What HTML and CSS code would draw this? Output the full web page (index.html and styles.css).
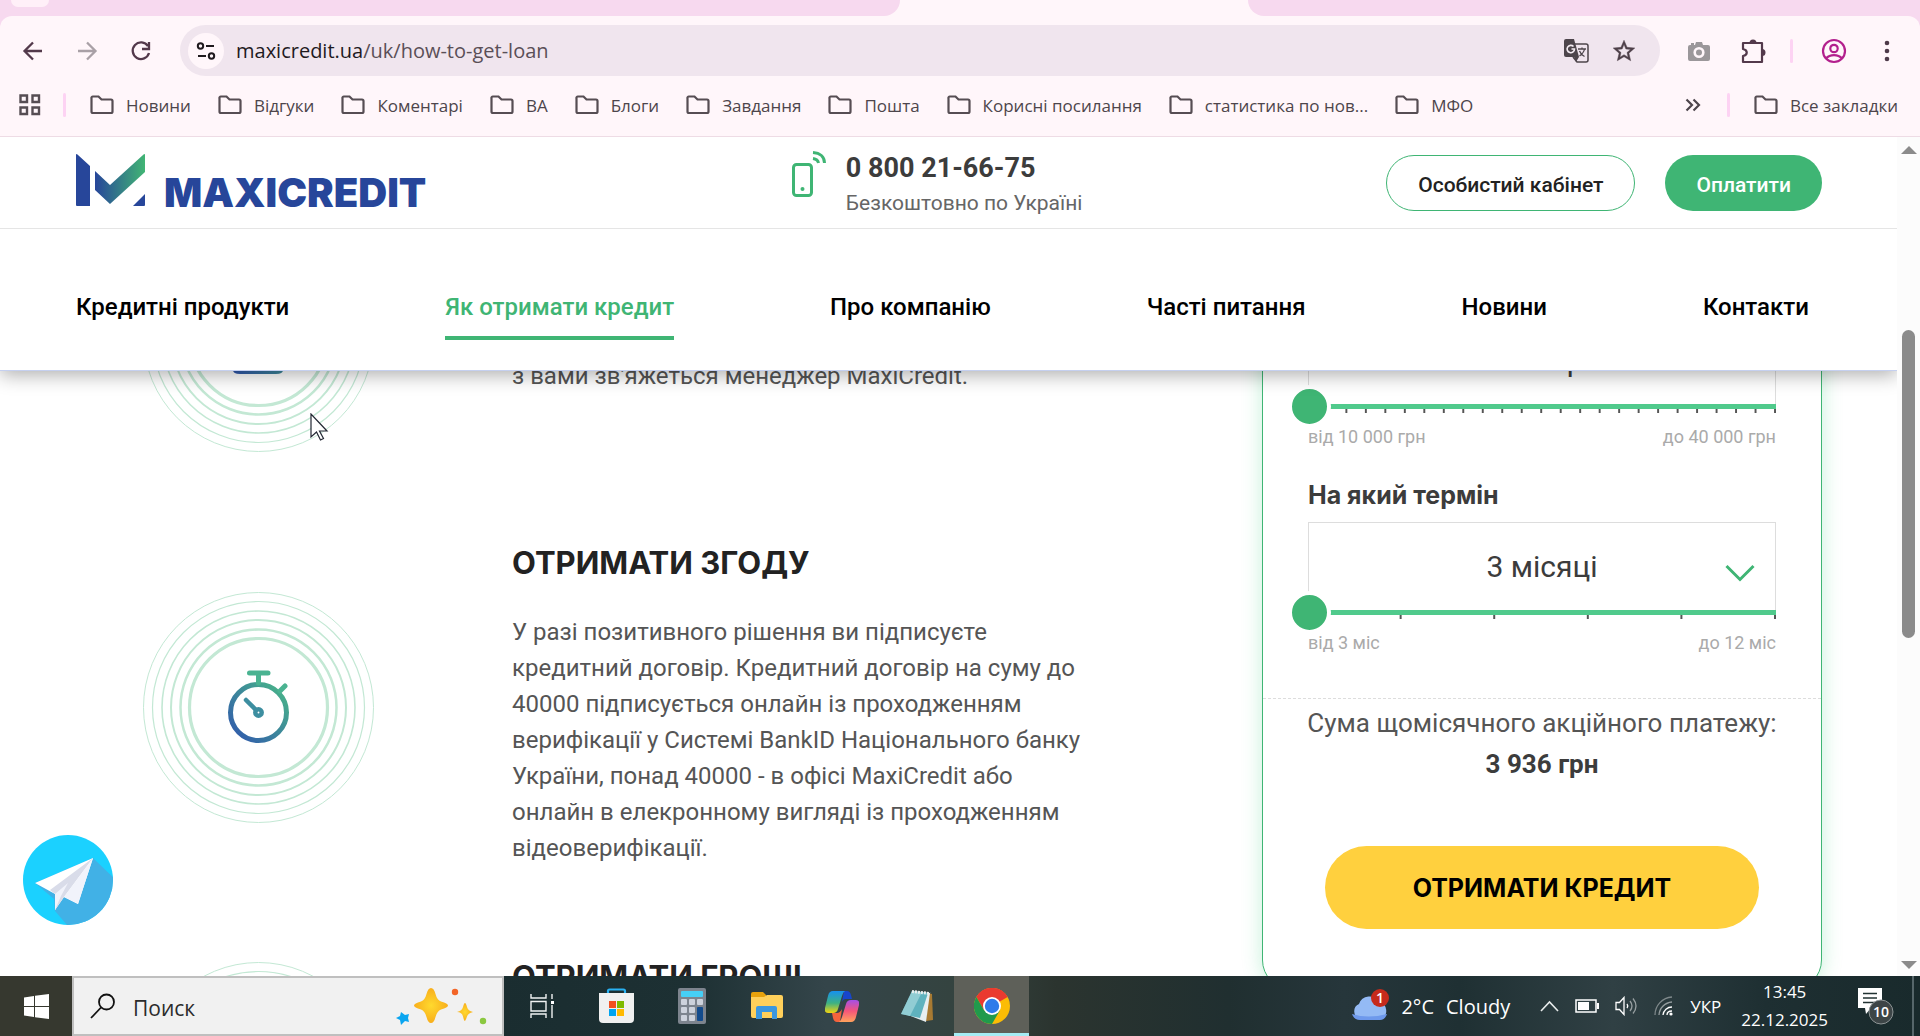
FILE: index.html
```html
<!DOCTYPE html>
<html lang="uk">
<head>
<meta charset="utf-8">
<title>MaxiCredit – Як отримати кредит</title>
<link rel="stylesheet" href="styles.css">
</head>
<body>
<svg class="defs" width="0" height="0" aria-hidden="true">
  <defs>
    <linearGradient id="brand" x1="0" y1="1" x2="1" y2="0"><stop offset="0" stop-color="#2f55ae"/><stop offset="1" stop-color="#4ab987"/></linearGradient>
    <linearGradient id="mark" x1="0" y1="0" x2="1" y2="0"><stop offset="0" stop-color="#27469a"/><stop offset="1" stop-color="#41b574"/></linearGradient>
    <symbol id="folder" viewBox="0 0 24 20"><path d="M1.500 3.500 a1.500 1.500 0 0 1 1.500-2h5.500l3 3h9.500a1.500 1.500 0 0 1 1.500 1.500v10.500a1.500 1.500 0 0 1-1.500 1.500h-18a1.500 1.500 0 0 1-1.500-1.500z" fill="none" stroke="#564d53" stroke-width="2.200"/></symbol>
    <symbol id="rings" viewBox="0 0 231 231">
      <g fill="none" stroke="#c3e8d4">
        <circle cx="115.500" cy="115.500" r="115" stroke-width="1"/>
        <circle cx="115.500" cy="115.500" r="106" stroke-width="1.200"/>
        <circle cx="115.500" cy="115.500" r="96.500" stroke-width="1.600"/>
        <circle cx="115.500" cy="115.500" r="87.500" stroke-width="2"/>
        <circle cx="115.500" cy="115.500" r="78" stroke-width="2.500"/>
        <circle cx="115.500" cy="115.500" r="69" stroke-width="3.200"/>
      </g>
    </symbol>
  </defs>
</svg>

<div class="browser">
  <header class="chrome">
    <div class="tabstrip"><div class="tabs-left"><i class="tab-pill"></i></div><div class="tab-active"></div><div class="tabs-right"></div></div>
    <div class="toolbar">
      <div class="nav-buttons">
        <button class="icon-btn" aria-label="Назад"><svg width="24" height="24" viewBox="0 0 24 24"><path d="M21 12H4M12 3.500L3.500 12l8.500 8.500" fill="none" stroke="#53394b" stroke-width="2.300"/></svg></button>
        <button class="icon-btn" aria-label="Вперед"><svg width="24" height="24" viewBox="0 0 24 24"><path d="M3 12h17M12 3.500l8.500 8.500-8.500 8.500" fill="none" stroke="#a9a0a6" stroke-width="2.300"/></svg></button>
        <button class="icon-btn" aria-label="Оновити"><svg width="24" height="24" viewBox="0 0 24 24"><path d="M19 7.200A8.300 8.300 0 1 0 20 14" fill="none" stroke="#53394b" stroke-width="2.300"/><path d="M20 3v7h-7" fill="none" stroke="#53394b" stroke-width="2.300"/></svg></button>
      </div>
      <div class="omnibox">
        <button class="site-info" aria-label="Відомості про сайт"><svg width="20" height="20" viewBox="0 0 20 20" fill="none" stroke="#1f1a1e" stroke-width="2"><circle cx="4.500" cy="5" r="2.700"/><path d="M10 5h8M2 15h8"/><circle cx="15.500" cy="15" r="2.700"/></svg></button>
        <div class="url"><span class="host">maxicredit.ua</span>/uk/how-to-get-loan</div>
        <button class="icon-btn" aria-label="Перекласти"><svg width="26" height="26" viewBox="0 0 26 26"><path d="M10 6h13a2 2 0 0 1 2 2v14a2 2 0 0 1-2 2h-9l-4-5" fill="#f0e5ee" stroke="#4d454b" stroke-width="1.500"/><path d="M1 3a2 2 0 0 1 2-2h8l5 18H3a2 2 0 0 1-2-2z" fill="#4d454b"/><path d="M11 19l5 0-3 5z" fill="#4d454b"/><path d="M10.500 8.500A3.700 3.700 0 1 0 11.500 11H8.500" fill="none" stroke="#f4ecf2" stroke-width="1.600"/><path d="M15 11h8M19 9.500V11M21.500 11c-.5 3-3 5.500-5 7M16.500 13c1 2.500 3 4.500 5 5.500" fill="none" stroke="#4d454b" stroke-width="1.300"/></svg></button>
        <button class="icon-btn" aria-label="Додати до закладок"><svg width="26" height="26" viewBox="0 0 24 24"><path fill="#4d3f48" stroke="#4d3f48" stroke-width=".4" d="M22 9.240l-7.190-.62L12 2 9.190 8.630 2 9.240l5.460 4.730L5.820 21 12 17.270 18.180 21l-1.630-7.030L22 9.240zM12 15.400l-3.760 2.270 1-4.280-3.320-2.880 4.380-.38L12 6.100l1.710 4.040 4.380.38-3.320 2.880 1 4.280L12 15.400z"/></svg></button>
      </div>
      <div class="extensions">
        <button class="icon-btn" aria-label="Камера"><svg width="24" height="24" viewBox="0 0 24 24"><path d="M3 6h1V4h3v2h1l1-3h6l1 3h5a2 2 0 0 1 2 2v12a2 2 0 0 1-2 2H3a2 2 0 0 1-2-2V8a2 2 0 0 1 2-2z" fill="#9b979a"/><circle cx="12" cy="13.500" r="4.300" fill="none" stroke="#fff6fa" stroke-width="2.600"/></svg></button>
        <button class="icon-btn" aria-label="Розширення"><svg width="28" height="28" viewBox="0 0 28 28"><path d="M4 6h19v19H4v-6c5-1 5-6 0-7z" fill="none" stroke="#53394b" stroke-width="2.200" stroke-linejoin="round"/><path d="M10.500 6a3.500 3.500 0 0 1 7 0zM23 12a3.500 3.500 0 0 1 0 7z" fill="#53394b"/></svg></button>
        <i class="divider"></i>
        <button class="icon-btn" aria-label="Профіль"><svg width="26" height="26" viewBox="0 0 26 26" fill="none" stroke="#b3208d" stroke-width="2.200"><circle cx="13" cy="13" r="11"/><circle cx="13" cy="10.500" r="3.700"/><path d="M5 20.500c4-4.500 12-4.500 16 0"/></svg></button>
        <button class="icon-btn" aria-label="Меню"><svg width="24" height="24" viewBox="0 0 24 24" fill="#4e3a49"><circle cx="12" cy="4" r="2.300"/><circle cx="12" cy="12" r="2.300"/><circle cx="12" cy="20" r="2.300"/></svg></button>
      </div>
    </div>
    <nav class="bookmarks" aria-label="Закладки">
      <svg class="apps" width="22" height="22" viewBox="0 0 22 22" fill="none" stroke="#564d53" stroke-width="2.400"><path d="M1.500 1.500h6.500v6.500H1.500zM13.500 1.500h6.500v6.500h-6.500zM1.500 13.500h6.500v6.500H1.500zM13.500 13.500h6.500v6.500h-6.500z"/></svg>
      <i class="divider"></i>
      <div class="bookmark-list">
        <a href="#"><svg><use href="#folder"/></svg>Новини</a>
        <a href="#"><svg><use href="#folder"/></svg>Відгуки</a>
        <a href="#"><svg><use href="#folder"/></svg>Коментарі</a>
        <a href="#"><svg><use href="#folder"/></svg>ВА</a>
        <a href="#"><svg><use href="#folder"/></svg>Блоги</a>
        <a href="#"><svg><use href="#folder"/></svg>Завдання</a>
        <a href="#"><svg><use href="#folder"/></svg>Пошта</a>
        <a href="#"><svg><use href="#folder"/></svg>Корисні посилання</a>
        <a href="#"><svg><use href="#folder"/></svg>статистика по нов...</a>
        <a href="#"><svg><use href="#folder"/></svg>МФО</a>
      </div>
      <button class="icon-btn more" aria-label="Інші закладки"><svg width="16" height="14" viewBox="0 0 16 14" fill="none" stroke="#4d454b" stroke-width="2.200"><path d="M1.500 1.500L7 7l-5.500 5.500M8.500 1.500L14 7l-5.500 5.500"/></svg></button>
      <i class="divider"></i>
      <a href="#"><svg><use href="#folder"/></svg>Все закладки</a>
    </nav>
  </header>

  <div class="viewport">
    <div class="page">
      <div class="site-header">
        <div class="top-row">
          <a class="logo" href="#"><svg width="69" height="52" viewBox="0 0 69 52"><path d="M0 1q0-2 2 0l12 11v40H1q-1 0-1-1z" fill="#27469a"/><path d="M19 17l15 14L67 1q2-2 2 0v17L34 50 19 36z" fill="url(#mark)"/><path d="M57 52l12-12v11q0 1-1 1z" fill="#27469a"/></svg><span>MAXICREDIT</span></a>
          <div class="phone">
            <svg width="34" height="46" viewBox="0 0 34 46" fill="none" stroke="#3fb574"><rect x="1.500" y="13.500" width="18" height="31" rx="3" stroke-width="3"/><circle cx="10.500" cy="38" r="2" fill="#3fb574" stroke="none"/><path d="M21 1.500c7 .5 11.500 4.500 11.500 10.500M21 7.500c3.500.5 5 2 5.500 4.500" stroke-width="3"/></svg>
            <div><a class="phone-number" href="tel:0800216675">0 800 21-66-75</a><p>Безкоштовно по Україні</p></div>
          </div>
          <div class="actions"><button class="pill outline">Особистий кабінет</button><button class="pill solid">Оплатити</button></div>
        </div>
        <nav class="main-nav">
          <a href="#">Кредитні продукти</a><a class="active" href="#">Як отримати кредит</a><a href="#">Про компанію</a><a href="#">Часті питання</a><a href="#">Новини</a><a href="#">Контакти</a>
        </nav>
      </div>

      <main class="content">
        <div class="columns">
          <section class="steps">
            <article class="step first">
              <svg class="step-icon" viewBox="0 0 231 231"><use href="#rings"/><path d="M90 80h50v69q0 4-7 4H97q-7 0-7-4z" fill="url(#brand)"/></svg>
              <div class="step-text"><p>з вами зв'яжеться менеджер MaxiCredit.</p></div>
            </article>
            <article class="step">
              <svg class="step-icon" viewBox="0 0 231 231"><use href="#rings"/>
                <g fill="none" stroke="url(#brand)" stroke-width="5" stroke-linecap="round"><circle cx="115.500" cy="120.500" r="28"/></g>
                <g fill="none" stroke="#4ab391" stroke-width="5" stroke-linecap="round"><path d="M106.500 81h18.500M115.500 83v8M137 99l5-5"/></g>
                <g fill="none" stroke="#3d8ea0" stroke-width="4.500" stroke-linecap="round"><path d="M103 108l10 10"/><circle cx="115.500" cy="120.500" r="3.200"/></g>
              </svg>
              <div class="step-text">
                <h2>ОТРИМАТИ ЗГОДУ</h2>
                <p>У разі позитивного рішення ви підписуєте кредитний договір. Кредитний договір на суму до 40000 підписується онлайн із проходженням верифікації у Системі BankID Національного банку України, понад 40000 - в офісі MaxiCredit або онлайн в елекронному вигляді із проходженням відеоверифікації.</p>
              </div>
            </article>
            <article class="step last">
              <svg class="step-icon" viewBox="0 0 231 231"><use href="#rings"/></svg>
              <div class="step-text"><h2>ОТРИМАТИ ГРОШІ</h2></div>
            </article>
          </section>

          <form class="calculator">
            <div class="field">
              <label class="field-title" for="amount">Яка сума</label>
              <div class="box"><input id="amount" class="amount" type="text" value="10 000 грн"></div>
              <div class="ticks by-24"></div>
              <input class="slider" type="range" min="10000" max="40000" value="10000" aria-label="Сума кредиту">
              <div class="limits"><span>від 10 000 грн</span><span>до 40 000 грн</span></div>
            </div>
            <div class="field">
              <label class="field-title" for="term">На який термін</label>
              <div class="box"><select id="term" class="term"><option>3 місяці</option></select><svg class="chevron" width="30" height="18" viewBox="0 0 30 18"><path d="M1.500 2L15 15.500 28.500 2" fill="none" stroke="#3fb574" stroke-width="3"/></svg></div>
              <div class="ticks by-5"></div>
              <input class="slider" type="range" min="3" max="12" value="3" aria-label="Термін кредиту">
              <div class="limits"><span>від 3 міс</span><span>до 12 міс</span></div>
            </div>
            <div class="summary"><p>Сума щомісячного акційного платежу:</p><strong>3 936 грн</strong></div>
            <button class="submit" type="button">ОТРИМАТИ КРЕДИТ</button>
          </form>
        </div>
      </main>

      <a class="telegram" href="#" aria-label="Telegram"><svg width="90" height="90" viewBox="0 0 90 90"><defs><clipPath id="disc"><circle cx="45" cy="45" r="45"/></clipPath></defs><g clip-path="url(#disc)"><rect width="90" height="90" fill="#1bd1ff"/><path d="M70 23l25 24v50H50L32 76l-1-12-19-16z" fill="#41b1e6"/><path d="M12 48l58-25-15 46-14-7-9 13v-16z" fill="#fff"/><path d="M70 23L27 55l5 4v16l9-13z" fill="#d9dce9"/><path d="M70 23L41 62l14 7z" fill="#f1f3fb"/><path d="M32 75v-16l13-11-7 13z" fill="#f1f3fb"/></g></svg></a>
      <svg class="cursor" width="19" height="28" viewBox="0 0 19 28"><path d="M1 1v23l5.500-5 4 8 3-1.500-4-7.500H17z" fill="#fff" stroke="#222733" stroke-width="1.200"/></svg>
    </div>
    <div class="scrollbar"><i class="arrow up"></i><i class="thumb"></i><i class="arrow down"></i></div>
  </div>
</div>

<footer class="taskbar">
  <button class="start" aria-label="Пуск"><svg width="25" height="25" viewBox="0 0 25 25" fill="#fff"><path d="M0 3.500l10-1.500v10H0zM11 1.800L25 0v12H11zM0 13h10v10L0 21.500zM11 13h14v12l-14-1.800z"/></svg></button>
  <div class="search">
    <svg width="26" height="26" viewBox="0 0 26 26" fill="none" stroke="#111" stroke-width="1.800"><circle cx="16.500" cy="9" r="7.500"/><path d="M11 14.500L1 25"/></svg>
    <input type="search" placeholder="Поиск" aria-label="Поиск">
    <svg width="92" height="38" viewBox="0 0 92 38"><defs><radialGradient id="gold"><stop offset="0" stop-color="#ffd92e"/><stop offset="1" stop-color="#f8ae1c"/></radialGradient></defs><path d="M35 1q3 0 4.500 6 1.500 6 5.500 7.500 7 2 7 4t-7 4q-4 1.500-5.500 7.500-1.500 6-4.500 6t-4.500-6q-1.500-6-5.500-7.500-7-2-7-4t7-4q4-1.500 5.500-7.500 1.500-6 4.500-6z" fill="url(#gold)"/><path d="M69 16q1 0 2 4t6 5q-5 1-6 4.500T69 34q-1 0-2-4.500T61 25q5-1 6-5t2-4z" fill="url(#gold)"/><path d="M5 25l4 3 4-1-1 4 1 4-4-1-4 4-1-5-4-2 4-2z" fill="#0aa5f0"/><circle cx="59" cy="5" r="3.200" fill="#f36527"/><circle cx="87" cy="34" r="3.200" fill="#8bc840"/></svg>
  </div>
  <div class="apps-row">
    <button aria-label="Подання завдань"><svg width="24" height="24" viewBox="0 0 24 24" fill="none" stroke="#f0f2f2" stroke-width="1.400"><path d="M1 0v4h15V0M1 24v-4h15v4M1 7.500h15v9.500H1zM22 0v5M22 11v13"/><path d="M21 7h3v3h-3z" fill="#fff" stroke="none"/></svg></button>
    <button aria-label="Microsoft Store"><svg width="35" height="36" viewBox="0 0 35 36"><path d="M9 7V3q0-1.500 1.500-1.500h14Q26 1.500 26 3v4" fill="none" stroke="#29b1f2" stroke-width="2.200"/><path d="M0 5h35v26q0 4-4 4H4q-4 0-4-4z" fill="#f0f0f0"/><path d="M10 13h7v7h-7z" fill="#f25022"/><path d="M18 13h7v7h-7z" fill="#7fba00"/><path d="M10 21h7v7h-7z" fill="#00a4ef"/><path d="M18 21h7v7h-7z" fill="#ffb900"/></svg></button>
    <button aria-label="Калькулятор"><svg width="28" height="36" viewBox="0 0 28 36"><rect width="28" height="36" rx="2" fill="#7d848e"/><rect x="3" y="3" width="22" height="6" rx="1" fill="#45cff6"/><g fill="#cdd2dc"><rect x="3" y="11" width="6" height="6" rx="1"/><rect x="11" y="11" width="6" height="6" rx="1"/><rect x="19" y="11" width="6" height="6" rx="1"/><rect x="3" y="19" width="6" height="6" rx="1"/><rect x="11" y="19" width="6" height="6" rx="1"/><rect x="3" y="27" width="6" height="6" rx="1"/><rect x="11" y="27" width="6" height="6" rx="1"/></g><rect x="19" y="19" width="6" height="14" rx="1" fill="#134b8c"/></svg></button>
    <button aria-label="Провідник"><svg width="32" height="28" viewBox="0 0 32 28"><path d="M0 2q0-2 2-2h10l3 3v6H0z" fill="#e8a20c"/><path d="M0 5h13l3-2h14q2 0 2 2v19q0 2-2 2H2q-2 0-2-2z" fill="#ffd05b"/><path d="M5 27V16q0-2 2-2h17q2 0 2 2v11h-5v-7H11v7z" fill="#3c97df"/></svg></button>
    <button aria-label="Copilot"><svg width="34" height="31" viewBox="0 0 34 31"><defs><linearGradient id="cpa" x2="0" y2="1"><stop offset="0" stop-color="#1690f0"/><stop offset=".55" stop-color="#3db183"/><stop offset="1" stop-color="#f2d411"/></linearGradient><linearGradient id="cpb" x2="0" y2="1"><stop offset="0" stop-color="#a44fe8"/><stop offset=".5" stop-color="#f5557a"/><stop offset="1" stop-color="#ffa35c"/></linearGradient></defs><path d="M19 0h3q3 0 4 4l1 4h-6q-3 0-4 3z" fill="#1746cc"/><path d="M15 31h-3q-3 0-4-4l-1-5h5q3 0 5-4z" fill="#f4633d"/><path d="M8 0h12q-2 1-3 5l-4 13q-1 4-5 4H3q-4 0-3-5L3 5Q4 0 8 0z" fill="url(#cpa)"/><path d="M26 31H14q2-1 3-5l4-13q1-4 5-4h5q4 0 3 5l-3 12q-1 5-5 5z" fill="url(#cpb)"/></svg></button>
    <button aria-label="Блокнот"><svg width="34" height="34" viewBox="0 0 34 34"><path d="M28 4l4 1 1 26-7 1z" fill="#a87a32"/><path d="M12 2l18 2-4 29-18-7z" fill="#e7eef0"/><path d="M12 2l16 2-8 25-19-4z" fill="#5fb2be"/><path d="M12 2l10 1L10 27l-9-2z" fill="#a6d8dd" opacity=".7"/><path d="M12 2.500l18 2" stroke="#e9eeee" stroke-width="3" stroke-dasharray="2 1"/></svg></button>
    <button class="current" aria-label="Google Chrome"><svg width="36" height="36" viewBox="0 0 36 36"><circle cx="18" cy="18" r="18" fill="#fbbc05"/><path d="M18 18L2.400 9A18 18 0 0 1 33.600 9z" fill="#ea3a30"/><path d="M18 9h15.600A18 18 0 0 0 2.400 9l7.800 13.500z" fill="#ea3a30"/><path d="M2.400 9A18 18 0 0 0 18 36l7.800-13.500H10.200z" fill="#209a4c"/><circle cx="18" cy="18" r="9" fill="#fff"/><circle cx="18" cy="18" r="7.200" fill="#2f7bea"/></svg></button>
  </div>
  <div class="tray">
    <button class="weather" aria-label="Погода"><svg width="37" height="34" viewBox="0 0 37 34"><path d="M8 30a8 8 0 0 1-1-15A11 11 0 0 1 27 13a9 9 0 0 1 2 17z" fill="#94baf5"/><path d="M8 31q-6 0-8-6 16 5 35 0-2 6-7 6z" fill="#6e99ec"/><circle cx="28" cy="9" r="9" fill="#c62a1c"/><text x="28" y="14" text-anchor="middle" class="badge-text">1</text></svg><span>2°C</span><span>Cloudy</span></button>
    <svg width="19" height="12" viewBox="0 0 19 12" fill="none" stroke="#e8ecec" stroke-width="1.600"><path d="M1 11L9.500 2 18 11"/></svg>
    <svg width="24" height="14" viewBox="0 0 24 14"><path d="M1 1h20v12H1z" fill="none" stroke="#fff" stroke-width="1.500"/><path d="M3 3h11v8H3zM22 4h2v6h-2z" fill="#fff"/></svg>
    <svg width="23" height="20" viewBox="0 0 23 20" fill="none" stroke="#fff" stroke-width="1.300"><path d="M1 6.500h3.500L9 1.500v17l-4.500-5H1z"/><path d="M12 8q1.500 2 0 4"/><path d="M15 5q4 5 0 10M18 2.500q6 7.500 0 15" opacity=".5"/></svg>
    <svg width="20" height="20" viewBox="0 0 20 20" fill="none" stroke="#fff" stroke-width="1.300"><path d="M1 19A18 18 0 0 1 18 1" opacity=".4"/><path d="M5 19A14 14 0 0 1 18 6" opacity=".5"/><path d="M9 19a9 9 0 0 1 9-8M13 19q0-4 5-4"/><circle cx="17" cy="18" r="1.600" fill="#fff" stroke="none"/></svg>
    <span class="lang">УКР</span>
    <div class="clock"><span>13:45</span><span>22.12.2025</span></div>
    <button class="notifications" aria-label="Сповіщення"><svg width="36" height="38" viewBox="0 0 36 38"><path d="M0 1h24v20H13l-5 6-1-6H0z" fill="#fff"/><path d="M5 6.500h14M5 11h14M5 15.500h14" stroke="#233" stroke-width="1.300"/><circle cx="23" cy="25" r="12" fill="#3d4547" stroke="#8d9495" stroke-width="1"/><text x="23" y="30" text-anchor="middle" class="badge-text">10</text></svg></button>
    <i class="show-desktop"></i>
  </div>
</footer>
</body>
</html>
```
FILE: styles.css
```css
* { box-sizing: border-box; }

body {
  margin: 0;
  height: 100vh;
  display: flex;
  flex-direction: column;
  overflow: hidden;
  background: #fff;
  font-family: Roboto, "Liberation Sans", sans-serif;
  color: #555;
}

h2, p { margin: 0; }
a { color: inherit; text-decoration: none; }
button { border: 0; padding: 0; background: none; font: inherit; color: inherit; cursor: pointer; }
svg { display: block; flex: none; }
.defs { position: absolute; }

.browser { flex: 1; min-height: 0; display: flex; flex-direction: column; }

/* browser chrome */
.chrome { background: #f7d9ef; font-family: "Open Sans", "Noto Sans", sans-serif; }
.tabstrip { display: flex; height: 16px; background: #fff6fa; }
.tabs-left { width: 900px; background: #f7d9ef; border-bottom-right-radius: 16px; padding-left: 11px; }
.tab-pill { display: block; width: 38px; height: 7px; background: #fff0f8; border-radius: 0 0 12px 12px; }
.tab-active { width: 348px; }
.tabs-right { flex: 1; background: #f7d9ef; border-bottom-left-radius: 16px; }
.toolbar {
  display: flex;
  align-items: center;
  height: 62px;
  padding: 7px 21px 0;
  background: #fff6fa;
  border-radius: 12px 12px 0 0;
}
.icon-btn { display: flex; align-items: center; justify-content: center; }
.nav-buttons { display: flex; gap: 30px; width: 159px; }
.omnibox {
  flex: 1;
  display: flex;
  align-items: center;
  height: 51px;
  padding: 0 23px 0 8px;
  gap: 22px;
  border-radius: 26px;
  background: #f0e5ee;
}
.site-info { display: flex; align-items: center; justify-content: center; width: 36px; height: 36px; margin-right: -10px; border-radius: 50%; background: #fff6fa; }
.url { flex: 1; font-size: 20px; color: #5a4f57; }
.host { color: #1f1a1e; }
.extensions { display: flex; align-items: center; gap: 28px; padding-left: 27px; }
.extensions .divider { margin-left: -5px; }
.divider { width: 3px; height: 24px; border-radius: 2px; background: #fdd3f3; }
.bookmarks {
  display: flex;
  align-items: center;
  height: 59px;
  padding: 0 22px 4px 19px;
  border-bottom: 1px solid #eedce5;
  background: #fff6fa;
  font-size: 17px;
  color: #4d454b;
}
.bookmarks a { display: flex; align-items: center; gap: 12px; white-space: nowrap; }
.bookmarks a svg { width: 24px; height: 20px; }
.bookmarks > .divider { margin-left: 22px; }
.bookmark-list { flex: 1; display: flex; gap: 27px; margin-left: 24px; }
.bookmarks > a { margin-left: 24px; }
.bookmarks .more + .divider { margin-left: 26px; }

/* page viewport */
.viewport { flex: 1; min-height: 0; display: flex; }
.page { flex: 1; position: relative; min-width: 0; display: flex; flex-direction: column; overflow: hidden; }
.scrollbar { width: 23px; display: flex; flex-direction: column; align-items: center; padding: 9px 0 7px; background: #fcfcfc; }
.arrow { border: 8px solid transparent; border-top: 0; border-bottom: 8px solid #8b8b8b; }
.arrow.down { border-bottom: 0; border-top: 8px solid #8b8b8b; margin-top: auto; }
.thumb { width: 13px; height: 308px; margin-top: 176px; border-radius: 7px; background: #8b8b8b; }

/* site header */
.site-header { position: relative; z-index: 1; background: #fff; border-bottom: 1px solid #c5d0f0; box-shadow: 0 4px 18px rgba(0, 0, 0, .32); }
.top-row {
  display: grid;
  grid-template-columns: 41% 1fr auto;
  align-items: center;
  height: 92px;
  padding: 0 75px 0 76px;
  border-bottom: 1px solid #e5e5e5;
}
.logo { display: flex; align-items: flex-end; gap: 19px; padding-bottom: 6px; color: #27469a; }
.logo span { font: 900 40px/26px Inter, sans-serif; }
.phone { display: flex; gap: 20px; padding-top: 6px; }
.phone-number { display: block; font-size: 27px; font-weight: 700; line-height: 34px; color: #3c3c3c; }
.phone p { font-size: 21px; line-height: 36px; color: #666; }
.actions { display: flex; gap: 30px; }
.pill { height: 56px; padding: 4px 31px 0; border-radius: 28px; font-size: 21px; font-weight: 500; }
.outline { border: 1px solid #3fb574; color: #222; }
.solid { background: #3fb574; color: #fff; }
.main-nav { display: flex; justify-content: space-between; padding: 62px 88px 30px 76px; }
.main-nav a { padding-bottom: 13px; border-bottom: 4px solid transparent; font-size: 24px; font-weight: 500; line-height: 32px; color: #000; }
.main-nav .active { color: #3fb574; border-color: #3fb574; }

/* content */
.content { flex: 1; min-height: 0; }
.columns { display: flex; justify-content: space-between; margin-top: -150px; padding: 0 75px 0 143px; }
.steps { display: flex; flex-direction: column; gap: 96px; }
.step { display: grid; grid-template-columns: 231px 576px; gap: 138px; align-items: center; }
.step-icon { width: 231px; height: 231px; }
.step h2 { margin-bottom: 36px; font: 700 31px/30px Inter, sans-serif; color: #222; }
.step p { font-size: 24px; line-height: 36px; }
.first .step-text { align-self: end; padding-bottom: 58px; }
.last { align-items: start; }

/* calculator */
.calculator {
  align-self: flex-start;
  width: 560px;
  padding: 52px 45px 60px;
  border: 1px solid #3fb574;
  border-radius: 30px;
  background: #fff;
  box-shadow: 0 0 20px rgba(63, 205, 130, .3);
}
.field { margin-bottom: 31px; }
.field-title { display: block; margin-bottom: 12px; font: 700 25px/30px Inter, sans-serif; color: #3c3c3c; }
.box { display: flex; position: relative; height: 93px; border: 1px solid #ddd; border-bottom: 0; }
.amount, .term {
  width: 100%;
  border: 0;
  outline: 0;
  background: none;
  font: 400 30px/36px Roboto, sans-serif;
  color: #3c3c3c;
  text-align: center;
  text-align-last: center;
  appearance: none;
}
.amount { padding: 0 28px 4px 0; }
.term { padding: 0 0 4px; }
.chevron { position: absolute; right: 20px; top: 41px; pointer-events: none; }
.ticks { height: 4px; background: linear-gradient(to left, #555 2px, transparent 2px) right top repeat-x; }
.by-24 { background-size: calc(100% / 24) 4px; }
.by-5 { background-size: calc(100% / 5) 4px; }
.slider {
  display: block;
  position: relative;
  width: calc(100% + 20px);
  height: 43px;
  margin: -28px 0 0 -20px;
  appearance: none;
  background: none;
}
.slider::-webkit-slider-runnable-track { height: 5px; background: linear-gradient(#50ca8c, #50ca8c) right / calc(100% - 20px) 5px no-repeat; }
.slider::-webkit-slider-thumb { appearance: none; width: 43px; height: 43px; margin-top: -19px; border: 4px solid #fff; border-radius: 50%; background: #3fb574; }
.limits { display: flex; justify-content: space-between; margin-top: -3px; font-size: 18px; line-height: 24px; color: #aaa; }
.summary { margin: 43px -45px 0; padding-top: 4px; border-top: 1px dashed #ddd; text-align: center; font-size: 26px; line-height: 41px; }
.summary strong { color: #3c3c3c; }
.submit { display: block; width: 434px; height: 83px; margin: 61px auto 0; border-radius: 42px; background: #ffd03e; font: 700 25px/30px Inter, sans-serif; color: #000; }

/* floating items */
.telegram { position: absolute; left: 23px; bottom: 51px; z-index: 2; }
.cursor { position: absolute; left: 310px; top: 276px; z-index: 3; }

/* taskbar */
.taskbar {
  display: flex;
  height: 60px;
  background: linear-gradient(90deg, #1a2d30 26%, #1d3033 36%, #34454a 43%, #34433f 50%, #2b342f 55%, #202f30 64%, #26363b 70%, #1f3033 76%, #304044 84%, #1e2f32 92%, #192a2c);
  font-family: "Open Sans", "Noto Sans", sans-serif;
  color: #fff;
}
.start { display: flex; align-items: center; justify-content: center; width: 72px; background: #36382f; }
.search { display: flex; align-items: center; width: 432px; padding: 0 14px 0 16px; border: 2px solid #bfbfbf; background: #f1f1f1; }
.search input { flex: 1; min-width: 0; margin-left: 17px; border: 0; outline: 0; padding: 3px 0 0; background: none; font: 400 21px/30px "Open Sans", sans-serif; }
.search input::placeholder { color: #2b2b2b; }
.apps-row { display: flex; }
.apps-row button { display: flex; align-items: center; justify-content: center; width: 75px; }
.apps-row .current { background: #5e6059; border-bottom: 3px solid #a5edf5; padding-top: 3px; }
.tray { flex: 1; display: flex; align-items: center; justify-content: flex-end; gap: 16px; font-size: 17px; }
.weather { display: flex; align-items: center; gap: 12px; margin-right: 14px; font-size: 20px; }
.badge-text { font: 600 14px "Open Sans", sans-serif; fill: #fff; }
.clock { display: flex; flex-direction: column; align-items: center; margin: 0 14px 0 4px; line-height: 28px; }
.show-desktop { width: 2px; height: 60px; margin: 0 6px 0 2px; background: #56666a; }
```
